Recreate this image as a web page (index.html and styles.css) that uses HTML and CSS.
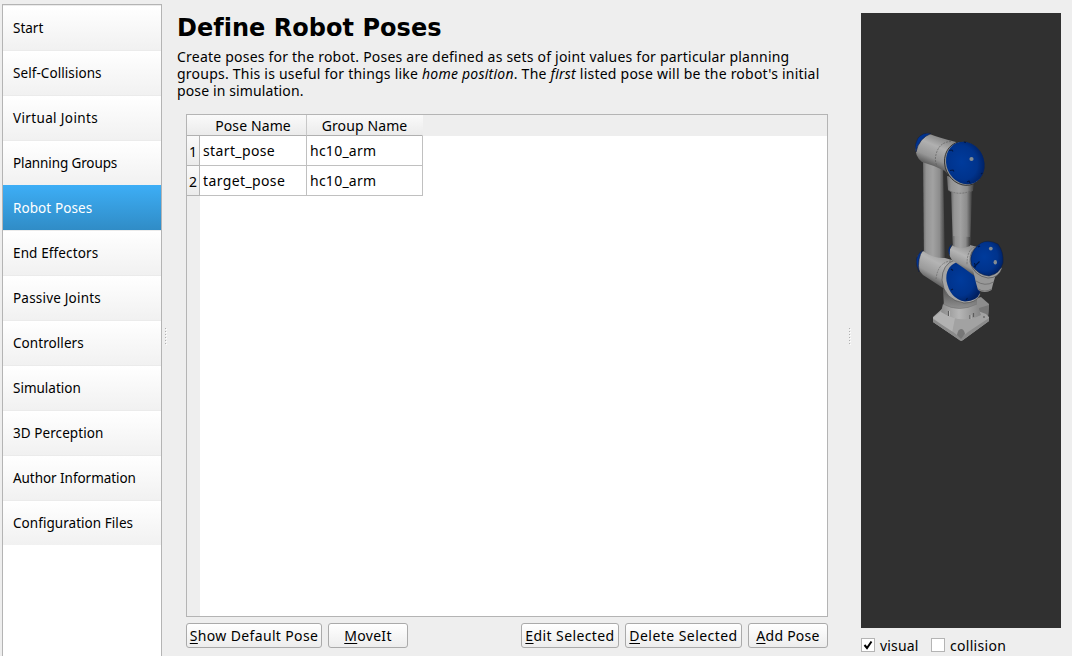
FILE: index.html
```
<!DOCTYPE html>
<html lang="en">
<head>
<meta charset="utf-8">
<title>Define Robot Poses</title>
<link rel="stylesheet" href="styles.css">
</head>
<body>
<div class="window">
  <nav class="sidebar">
    <a class="item"><span class="t-start">Start</span></a>
    <a class="item"><span class="t-self">Self-Collisions</span></a>
    <a class="item"><span class="t-virtual">Virtual Joints</span></a>
    <a class="item"><span class="t-planning">Planning Groups</span></a>
    <a class="item selected"><span class="t-poses">Robot Poses</span></a>
    <a class="item"><span class="t-end">End Effectors</span></a>
    <a class="item"><span class="t-passive">Passive Joints</span></a>
    <a class="item"><span class="t-controllers">Controllers</span></a>
    <a class="item"><span class="t-simulation">Simulation</span></a>
    <a class="item"><span class="t-perception">3D Perception</span></a>
    <a class="item"><span class="t-author">Author Information</span></a>
    <a class="item"><span class="t-config">Configuration Files</span></a>
  </nav>
  <div class="splitter left"><i></i><i></i><i></i><i></i><i></i><i></i></div>
  <main class="main">
    <h1>Define Robot Poses</h1>
    <p class="intro"><span class="line l1">Create poses for the robot. Poses are defined as sets of joint values for particular planning</span>
    <span class="line l2">groups. This is useful for things like <em>home position</em>. The <em>first</em> listed pose will be the robot's initial</span>
    <span class="line l3">pose in simulation.</span></p>
    <div class="table">
      <div class="head">
        <span class="corner"></span><span class="col pose">Pose Name</span><span class="col group">Group Name</span>
      </div>
      <div class="row"><span class="num">1</span><span class="cell pose">start_pose</span><span class="cell group">hc10_arm</span></div>
      <div class="row"><span class="num">2</span><span class="cell pose">target_pose</span><span class="cell group">hc10_arm</span></div>
      <div class="rest"></div>
    </div>
    <div class="buttons">
      <button class="b-show"><u>S</u>how Default Pose</button>
      <button class="b-moveit"><u>M</u>oveIt</button>
      <span class="spacer"></span>
      <button class="b-edit"><u>E</u>dit Selected</button>
      <button class="b-delete"><u>D</u>elete Selected</button>
      <button class="b-add"><u>A</u>dd Pose</button>
    </div>
  </main>
  <div class="splitter right"><i></i><i></i><i></i><i></i><i></i><i></i></div>
  <aside class="preview">
    <svg class="scene" width="200" height="615" viewBox="861 13 200 615">
      <defs>
        <linearGradient id="link"><stop offset="0" stop-color="#6c6c6c"/><stop offset=".15" stop-color="#949494"/><stop offset=".45" stop-color="#a2a2a2"/><stop offset=".75" stop-color="#8c8c8c"/><stop offset="1" stop-color="#3e3e3e"/></linearGradient>
        <linearGradient id="tube" gradientUnits="userSpaceOnUse" x1="944" y1="138" x2="930" y2="170"><stop offset="0" stop-color="#858585"/><stop offset=".3" stop-color="#b0b0b0"/><stop offset=".65" stop-color="#959595"/><stop offset="1" stop-color="#3c3c3c"/></linearGradient>
        <linearGradient id="lower" gradientUnits="userSpaceOnUse" x1="946" y1="254" x2="930" y2="284"><stop offset="0" stop-color="#9a9a9a"/><stop offset=".35" stop-color="#b4b4b4"/><stop offset=".7" stop-color="#9a9a9a"/><stop offset="1" stop-color="#484848"/></linearGradient>
        <linearGradient id="wrist" gradientUnits="userSpaceOnUse" x1="968" y1="246" x2="957" y2="269"><stop offset="0" stop-color="#939393"/><stop offset=".4" stop-color="#b4b4b4"/><stop offset=".75" stop-color="#949494"/><stop offset="1" stop-color="#444"/></linearGradient>
        <linearGradient id="base"><stop offset="0" stop-color="#8c8c8c"/><stop offset=".45" stop-color="#b6b6b6"/><stop offset="1" stop-color="#858585"/></linearGradient>
        <linearGradient id="neck" x1="0" y1="0" x2="0" y2="1"><stop offset="0" stop-color="#555"/><stop offset="1" stop-color="#989898"/></linearGradient>
        <radialGradient id="cap" cx=".42" cy=".45" r=".62"><stop offset="0" stop-color="#003b9c"/><stop offset=".65" stop-color="#00338c"/><stop offset="1" stop-color="#001f60"/></radialGradient>
      </defs>
      <!-- upper arm -->
      <path d="M923 156L943 165L945 264L924 261Z" fill="url(#link)"/>
      <!-- forearm -->
      <path d="M951 188L972 190L970 250L953 250Z" fill="url(#link)"/>
      <path d="M947 176L948 190Q958 197 973 191L974 181Z" fill="url(#link)"/>
      <path d="M948 190Q958 196 971 191" fill="none" stroke="#5d5d5d" stroke-width=".6" stroke-dasharray="2 1"/>
      <!-- elbow -->
      <path d="M928 133.5Q940 138 956 142L956 180Q949 177 945 171Q933 165 922 162Q914 156 916 144Q920 134 928 133.5Z" fill="url(#tube)"/>
      <path d="M931 133.5Q923 132 918 138Q914 144 916 152Q919 138 931 133.5Z" fill="#003390" stroke="#17203a" stroke-width=".6"/>
      <path d="M951 141.5Q938 142 935.5 157Q935 162 937 166" fill="none" stroke="#606060" stroke-width=".7" stroke-dasharray="2 1"/>
      <ellipse cx="964.3" cy="163.5" rx="19.3" ry="22.3" transform="rotate(-24 964.3 163.5)" fill="#909090" stroke="#292929" stroke-width=".8"/>
      <ellipse cx="965.3" cy="163" rx="18.8" ry="21.8" transform="rotate(-24 965.3 163)" fill="url(#cap)"/>
      <path d="M949 150.500l3 -.5l1 1.500M950 170.500l3 -.5l1 1.500M967 182l2-1l1 2M964 142l2 .5M981 174l1.500-1" fill="none" stroke="#001745" stroke-width="1.1"/>
      <circle cx="971.5" cy="159" r="2.100" fill="#848c92"/>
      <!-- base -->
      <path d="M974 299L981 297L989 304L988 318L978 320Z" fill="#8d8d8d"/>
      <path d="M979 308L989 305L988 317L980 318Z" fill="#777"/>
      <path d="M933 317L943 308L978 311L986 314L989 317V321L963 340Q961 342 958 339L933 322Z" fill="#a2a2a2"/>
      <path d="M933 318L944 309L955 318L952 333Z" fill="#b2b2b2"/>
      <path d="M933 319L953 332L961 338L968 332L989 318V321L963 340Q961 342 958 339L933 322Z" fill="#8b8b8b"/>
      <path d="M943 289H977L977 308Q960 315 944 307Z" fill="url(#neck)"/>
      <path d="M943 304Q959 313 977 304L981 315Q961 325 941 312Z" fill="url(#base)"/>
      <path d="M943 304Q959 313 977 304" fill="none" stroke="#777" stroke-width=".7"/>
      <path d="M957 335q1-6 4-6t4 5l-4 5Z" fill="#777"/>
      <path d="M948.500 311v5M970 315v4M973.500 313v4M984 316v2" stroke="#5c5c5c" stroke-width="1.200"/>
      <path d="M949.500 311v5M971 315v4" stroke="#ccc" stroke-width=".7"/>
      <!-- shoulder -->
      <path d="M923 251Q934 259 945 258L959 262L962 300Q949 298 943 288L923 275Q914 266 918 255Z" fill="url(#lower)"/>
      <path d="M923 250Q912 257 919 272Q917 258 923 250Z" fill="#003391" stroke="#17203a" stroke-width=".6"/>
      <path d="M951 261Q938 262 936 279" fill="none" stroke="#696969" stroke-width=".7" stroke-dasharray="2 1"/>
      <path d="M955 260Q942 264 942 280Q944 300 964 303Q976 303 980 295L978 272Z" fill="#a4a4a4" stroke="#4a4a4a" stroke-width=".6"/>
      <path d="M957 262Q945 267 946.500 281Q950 299 965 301.500Q977 301 980 293L978 274Z" fill="url(#cap)"/>
      <path d="M951 269l2 1.500M951 290l2-1M966 300l1.500-2" stroke="#001745" stroke-width="1.100"/>
      <!-- wrist -->
      <path d="M953 245Q961 250 970 245L981 248L976 277Q964 268 952 260Q946 252 953 245Z" fill="url(#wrist)"/>
      <path d="M953 236L970 237V246Q961 250 953 246Z" fill="url(#link)"/>
      <path d="M952 244Q946 249 950 256Q949 249 952 244Z" fill="#002c80"/>
      <path d="M975 247Q967 249 967 265" fill="none" stroke="#696969" stroke-width=".7" stroke-dasharray="2 1"/>
      <!-- tool joint -->
      <path d="M973 270Q984 280 996 274L993 284L991.500 290Q985 294 978 290L976 283Z" fill="#989898"/>
      <path d="M976 281Q985 287 993.500 282M978 289Q985 293 991.500 289" fill="none" stroke="#636363" stroke-width=".7"/>
      <path d="M979 246Q969 250 970 262Q974 276 988 278Q999 278 1002 268Z" fill="#a0a0a0" stroke="#333" stroke-width=".5"/>
      <path d="M981 243Q988 239 998 244Q1004 252 1003 263Q1000 274 989 276Q978 275 971.500 265Q968 252 981 243Z" fill="url(#cap)" stroke="#111d38" stroke-width=".5"/>
      <path d="M974 267l5.500-5.500M974.500 263l1 4.500M978 247l2-1" stroke="#001745" stroke-width="1.100"/>
      <circle cx="990.8" cy="248.600" r="1.900" fill="#848c92"/><ellipse cx="995.3" cy="262.300" rx="1.700" ry="2.200" fill="#848c92"/>
    </svg>
    <div class="checks">
      <label><span class="box"><svg width="12" height="12" viewBox="0 0 12 12"><path d="M2.500 6L5 9L9.500 2.500" fill="none" stroke="#000" stroke-width="2"/></svg></span><span class="t-visual">visual</span></label>
      <label><span class="box"></span><span class="t-collision">collision</span></label>
    </div>
  </aside>
</div>
</body>
</html>
```
FILE: styles.css
```
* { box-sizing: border-box; }
body { margin: 0; background: #eee; color: #000; font: 14px/17px "Noto Sans", sans-serif; }
.window { display: flex; width: 1072px; height: 656px; overflow: hidden; }
.sidebar { width: 160px; height: 660px; margin: 4px 0 0 2px; background: #fff; border: 1px solid #b4b4b4; flex: none; }
.item { display: flex; align-items: center; height: 45px; padding: 1px 0 0 10px; font-size: 13.5px; white-space: nowrap; background: linear-gradient(#fff, #f1f1f1); border-top: 1px solid #ebebeb; }
.item.selected { color: #fff; background: linear-gradient(#3daef6, #308cc6); border-top: 0; padding-top: 2px; }
.t-self { letter-spacing: .07px; }
.t-virtual { letter-spacing: .36px; }
.t-planning { letter-spacing: -.12px; }
.t-poses { letter-spacing: .08px; }
.t-end { letter-spacing: .13px; }
.t-passive { letter-spacing: .2px; }
.t-controllers, .t-perception { letter-spacing: .07px; }
.t-author { letter-spacing: -.05px; }
.t-config { letter-spacing: .05px; }
.splitter { display: flex; flex-direction: column; align-items: center; gap: 2px; width: 7px; padding-top: 328px; flex: none; }
.splitter i { width: 1px; height: 1px; background: #b0b0b0; box-shadow: 1px 1px #fff; }
.main { width: 659px; flex: none; padding: 14px 0 0 8px; display: flex; flex-direction: column; }
h1 { margin: 0; font: bold 24px/28px "DejaVu Sans", sans-serif; white-space: nowrap; letter-spacing: .03px; }
.intro { margin: 6px 0 15px; height: 51px; }
.line { display: block; width: max-content; white-space: nowrap; }
.l1 { letter-spacing: .215px; }
.l2 { letter-spacing: .228px; }
.l3 { letter-spacing: .12px; }
.table { width: 642px; height: 503px; margin-left: 9px; background: #fff; border: 1px solid #b4b4b4; display: flex; flex-direction: column; flex: none; }
.head { display: flex; height: 21px; background: #eee; flex: none; }
.corner, .col { background: linear-gradient(#fafafa, #ebebeb); border-bottom: 1px solid #b0b0b0; }
.corner { width: 13px; }
.col { line-height: 21px; text-align: center; border-right: 1px solid #c8c8c8; letter-spacing: .12px; }
.pose { width: 107px; }
.group { width: 116px; }
.col.group { border-right-color: transparent; }
.row { display: flex; height: 30px; flex: none; }
.num { width: 13px; border-right: 1px solid #b4b4b4; border-bottom: 1px solid #b4b4b4; background: linear-gradient(#fafafa, #ebebeb); text-align: center; line-height: 32px; }
.cell { padding-left: 3px; line-height: 29px; border-right: 1px solid #c0c0c0; border-bottom: 1px solid #c0c0c0; white-space: nowrap; letter-spacing: .38px; }
.cell.group { letter-spacing: .25px; }
.rest { width: 13px; flex: 1; background: #eee; }
.buttons { display: flex; gap: 6px; margin: 6px 0 0 9px; width: 642px; }
.spacer { flex: 1; margin: 0 -6px; }
button { height: 25px; padding: 0; border: 1px solid #aaa; border-radius: 3px; background: linear-gradient(#fff, #ededed); color: #000; font: inherit; white-space: nowrap; flex: none; }
u { text-underline-offset: 2px; text-decoration-thickness: 1px; }
.b-show { width: 136px; letter-spacing: .35px; }
.b-moveit { width: 80px; letter-spacing: .3px; }
.b-edit { width: 98px; letter-spacing: .4px; }
.b-delete { width: 117px; letter-spacing: .45px; }
.b-add { width: 80px; letter-spacing: .25px; }
.splitter.right { width: 43px; }
.preview { width: 200px; flex: none; padding-top: 13px; margin-left: -10px; }
.scene { display: block; background: #303030; }
.checks { display: flex; gap: 13px; padding-top: 9px; }
label { display: flex; gap: 5px; }
.t-visual { width: 38px; letter-spacing: .15px; }
.t-collision { letter-spacing: .3px; }
.box { width: 14px; height: 14px; margin-top: 1px; border: 1px solid #b4b4b4; background: #fff; display: block; }
.box svg { display: block; }
```
